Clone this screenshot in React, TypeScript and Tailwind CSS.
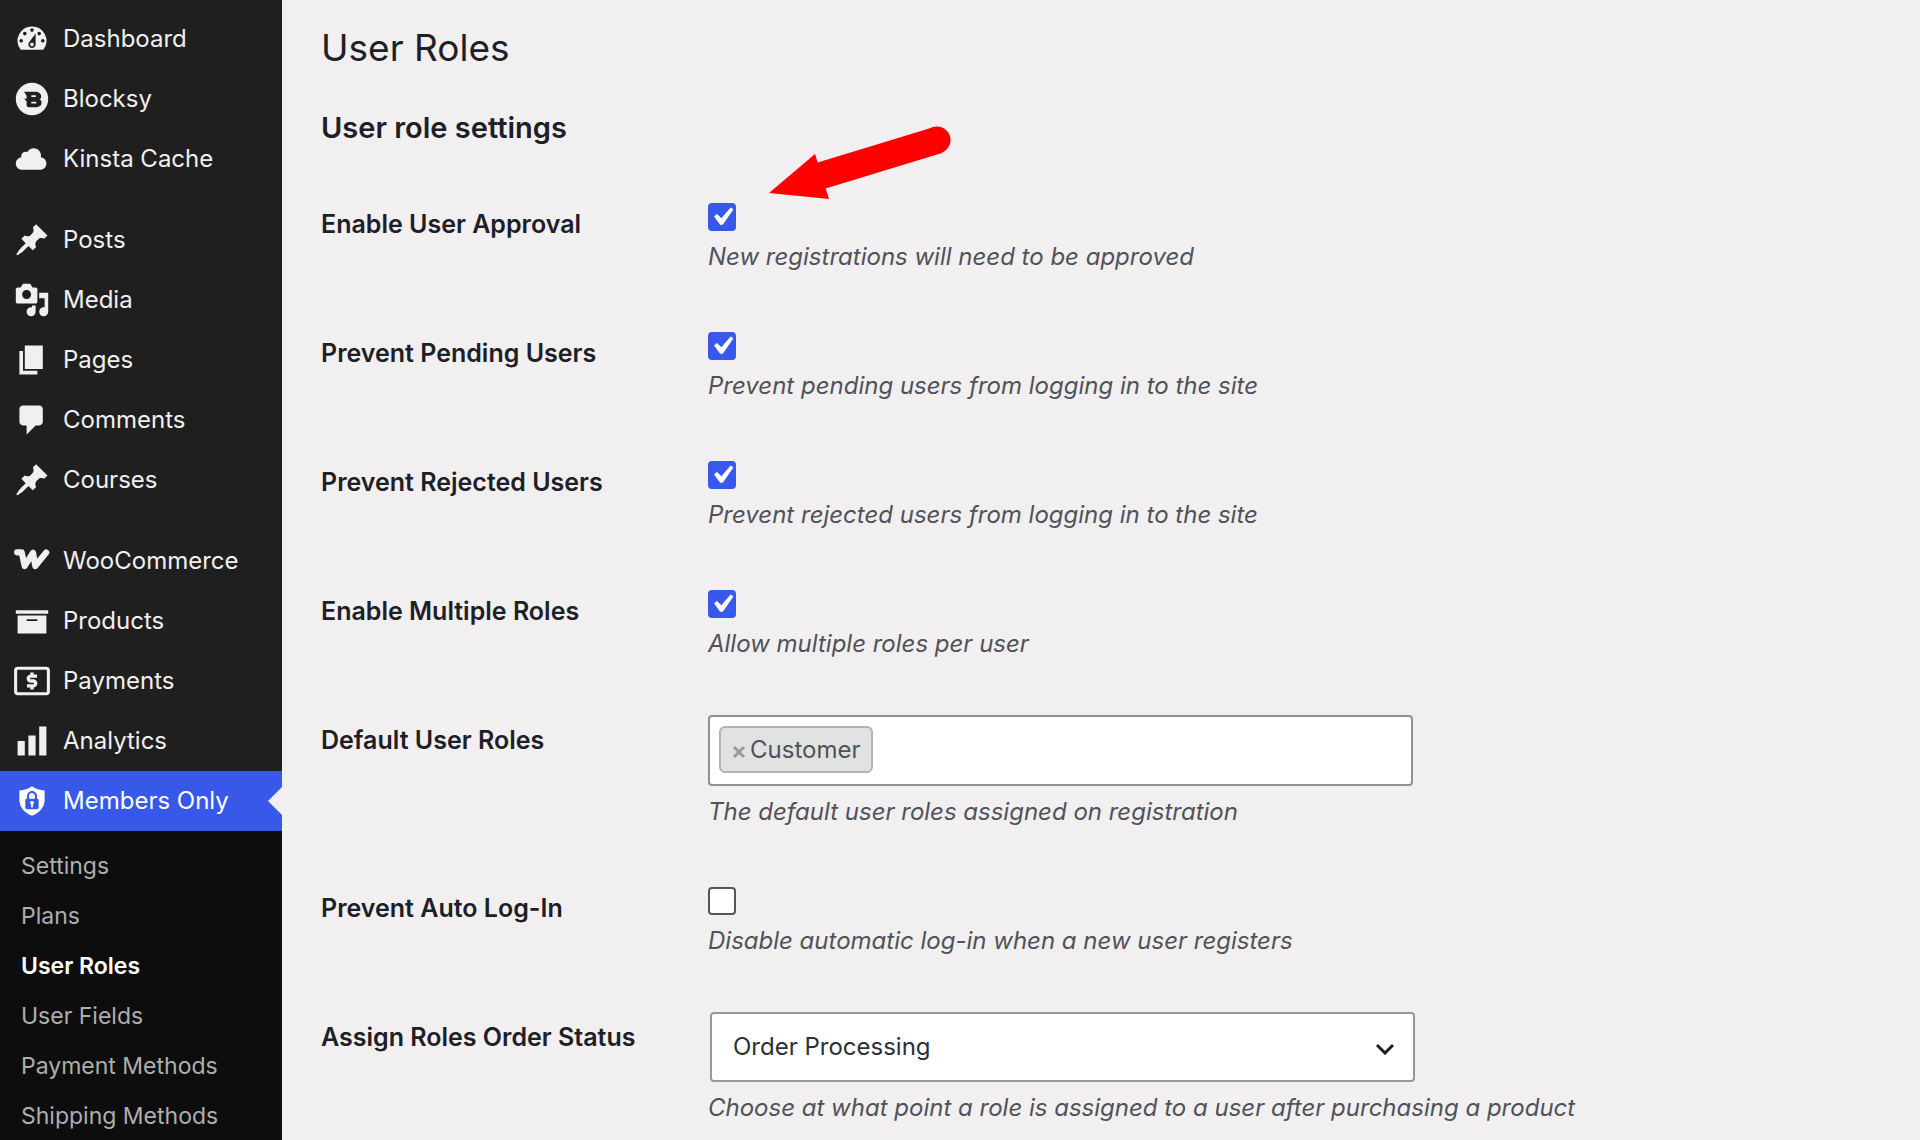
import { useState, type ReactNode } from "react";

const glyphs: Record<string, ReactNode> = {
  dashboard: (
    <path d="M3.76 16h12.48A7.998 7.998 0 0 0 10 3a7.998 7.998 0 0 0-6.24 13zM10 4c.55 0 1 .45 1 1s-.45 1-1 1-1-.45-1-1 .45-1 1-1zM6 6c.55 0 1 .45 1 1s-.45 1-1 1-1-.45-1-1 .45-1 1-1zm8 0c.55 0 1 .45 1 1s-.45 1-1 1-1-.45-1-1 .45-1 1-1zm-5.37 5.55L12 7v6c0 1.1-.9 2-2 2s-2-.9-2-2c0-.57.24-1.08.63-1.45zM4 10c.55 0 1 .45 1 1s-.45 1-1 1-1-.45-1-1 .45-1 1-1zm12 0c.55 0 1 .45 1 1s-.45 1-1 1-1-.45-1-1 .45-1 1-1zm-5 3c0-.55-.45-1-1-1s-1 .45-1 1 .45 1 1 1 1-.45 1-1z" />
  ),
  blocksy: (
    <>
      <circle cx="10" cy="10" r="9" />
      <path
        d="M5.6 6h6c2.200 0 3.500 1 3.500 2.600 0 .8-.3 1.400-.9 1.700.8.4 1.100 1 1.100 1.800 0 1.600-1.300 2.500-3.600 2.500H8.200c-.8 0-1.200-.4-1.200-1.200v-2.200L5.600 9.900H7V8.200z"
        fill="#1f1f1f"
      />
      <path d="M10 8.400h1.800M10 12h2" stroke="currentColor" strokeWidth="1" strokeLinecap="round" />
    </>
  ),
  cloud: (
    <path d="M14.9 9c1.8.2 3.1 1.7 3.1 3.5 0 1.9-1.6 3.5-3.5 3.5h-10C2.6 16 1 14.4 1 12.5 1 10.7 2.3 9.3 4.1 9 4 8.9 4 8.7 4 8.5 4 7.1 5.1 6 6.5 6c.3 0 .7.1.9.2C8.1 4.9 9.4 4 11 4c2.2 0 4 1.8 4 4 0 .4-.1.7-.1 1z" />
  ),
  pin: (
    <path d="M10.44 3.02l1.82-1.82 6.36 6.35-1.83 1.82c-1.05-.68-2.48-.57-3.41.36l-.75.75c-.92.93-1.04 2.35-.35 3.41l-1.83 1.82-2.41-2.41-2.8 2.79c-.42.42-3.38 2.71-3.8 2.29s1.86-3.39 2.28-3.81l2.79-2.79L4.1 9.36l1.83-1.82c1.05.69 2.48.57 3.4-.36l.75-.75c.93-.92 1.05-2.35.36-3.41z" />
  ),
  media: (
    <path d="M13 11V4c0-.55-.45-1-1-1h-1.67L9 1H5L3.67 3H2c-.55 0-1 .45-1 1v7c0 .55.45 1 1 1h10c.55 0 1-.45 1-1zM7 4.5c1.38 0 2.5 1.12 2.5 2.5S8.38 9.5 7 9.5 4.5 8.38 4.5 7 5.62 4.5 7 4.5zM14 6h5v10.5c0 1.38-1.12 2.5-2.5 2.5S14 17.88 14 16.5s1.12-2.5 2.5-2.5c.17 0 .34.02.5.05V9h-3V6zm-4 8.05V13h2v3.5c0 1.38-1.12 2.5-2.5 2.5S7 17.88 7 16.5 8.12 14 9.5 14c.17 0 .34.02.5.05z" />
  ),
  pages: <path d="M6 15V2h10v13H6zm-1 1h8v2H3V5h2v11z" />,
  comment: <path d="M5 2h9c1.1 0 2 .9 2 2v7c0 1.1-.9 2-2 2h-2l-5 5v-5H5c-1.1 0-2-.9-2-2V4c0-1.1.9-2 2-2z" />,
  woo: (
    <path
      d="M1.7 5.2H4.3L5.9 12.8 10.6 5.4 11.8 12.8 17.9 5.3"
      fill="none"
      stroke="currentColor"
      strokeWidth="3.4"
      strokeLinecap="round"
      strokeLinejoin="round"
    />
  ),
  archive: <path d="M19 4v2H1V4h18zM2 7h16v10H2V7zm11 3V9H7v1h6z" />,
  payments: (
    <>
      <rect x="0.9" y="2.9" width="18.2" height="14.2" rx="1.2" fill="none" stroke="currentColor" strokeWidth="1.7" />
      <path
        d="M12.8 7.3H9.300a1.350 1.350 0 0 0 0 2.700h1.400a1.350 1.350 0 0 1 0 2.700H7.200M10 5.300v2M10 12.700v2"
        fill="none"
        stroke="currentColor"
        strokeWidth="1.9"
      />
    </>
  ),
  bars: <path d="M18 18V2h-4v16h4zm-6 0V7H8v11h4zm-6 0v-8H2v8h4z" />,
  shield: (
    <>
      <path d="M10 1.800c2 1.500 4.400 2.200 7 2.300v5.400c0 4-2.700 7.100-7 8.700-4.300-1.600-7-4.700-7-8.700V4.100c2.600-.1 5-.8 7-2.300z" />
      <path d="M7.8 9V7.200a2.200 2.200 0 0 1 4.400 0V9" fill="none" stroke="#3858e9" strokeWidth="1.2" />
      <rect x="6.3" y="8.8" width="7.4" height="5.8" rx="0.8" fill="#3858e9" />
      <path d="M10 10a1 1 0 0 1 .5 1.900v1.700h-1v-1.700A1 1 0 0 1 10 10z" />
    </>
  ),
};

type Item = { icon: string; label: string; active?: boolean };

const groups: Item[][] = [
  [
    { icon: "dashboard", label: "Dashboard" },
    { icon: "blocksy", label: "Blocksy" },
    { icon: "cloud", label: "Kinsta Cache" },
  ],
  [
    { icon: "pin", label: "Posts" },
    { icon: "media", label: "Media" },
    { icon: "pages", label: "Pages" },
    { icon: "comment", label: "Comments" },
    { icon: "pin", label: "Courses" },
  ],
  [
    { icon: "woo", label: "WooCommerce" },
    { icon: "archive", label: "Products" },
    { icon: "payments", label: "Payments" },
    { icon: "bars", label: "Analytics" },
    { icon: "shield", label: "Members Only", active: true },
  ],
];

const subItems = ["Settings", "Plans", "User Roles", "User Fields", "Payment Methods", "Shipping Methods"];

function Sidebar() {
  return (
    <nav aria-label="Main menu" className="flex w-[282px] shrink-0 flex-col bg-[#1f1f1f] pt-[9px]">
      <div className="flex flex-col gap-[21px]">
        {groups.map((group, i) => (
          <ul key={i}>
            {group.map((item) => (
              <li key={item.label}>
                <a
                  href="#"
                  className={
                    item.active
                      ? "relative flex h-[60px] items-center gap-[13px] bg-[#3858e9] pl-3.5 text-2xl text-white"
                      : "flex h-[60px] items-center gap-[13px] pl-3.5 text-2xl text-[#f2eff0]"
                  }
                >
                  <svg viewBox="0 0 20 20" className="size-9 shrink-0" fill="currentColor" aria-hidden="true">
                    {glyphs[item.icon]}
                  </svg>
                  {item.label}
                  {item.active && (
                    <svg viewBox="0 0 14 28" className="absolute right-0 h-7 w-3.5" aria-hidden="true">
                      <path d="M14 0v28L0 14z" fill="#f2eff0" />
                    </svg>
                  )}
                </a>
              </li>
            ))}
          </ul>
        ))}
      </div>
      <ul className="flex flex-1 flex-col gap-5 bg-[#0d0d0d] px-[21px] py-5 text-[23px] leading-[30px] text-[#b0adae]">
        {subItems.map((label) => (
          <li key={label}>
            <a href="#" className={label === "User Roles" ? "font-semibold text-white" : ""}>
              {label}
            </a>
          </li>
        ))}
      </ul>
    </nav>
  );
}

function Row({ id, label, description, children }: { id: string; label: string; description: string; children: ReactNode }) {
  return (
    <div className="flex items-start">
      <label htmlFor={id} className="w-[387px] shrink-0 pt-[7px] text-[25px] leading-9 font-semibold">
        {label}
      </label>
      <div className="flex min-w-0 flex-1 flex-col items-start gap-2">
        {children}
        <p id={id + "-description"} className="text-2xl leading-9 text-[#50525a] italic">
          {description}
        </p>
      </div>
    </div>
  );
}

function CheckboxRow({ id, label, description, checked = false }: { id: string; label: string; description: string; checked?: boolean }) {
  return (
    <Row id={id} label={label} description={description}>
      <span className="relative mt-1 flex size-7">
        <input
          id={id}
          type="checkbox"
          defaultChecked={checked}
          aria-describedby={id + "-description"}
          className="peer size-7 appearance-none rounded border-2 border-[#55565a] bg-white checked:border-[#3858e9] checked:bg-[#3858e9]"
        />
        <svg
          viewBox="0 0 20 20"
          className="pointer-events-none absolute -top-1 -left-1 hidden size-9 peer-checked:block"
          fill="#fff"
          stroke="#fff"
          strokeWidth="0.3"
          strokeLinejoin="round"
          aria-hidden="true"
        >
          <path d="M14.83 4.89l1.34.94-5.81 8.38H9.02L5.78 9.67l1.34-1.25 2.57 2.4z" />
        </svg>
      </span>
    </Row>
  );
}

export default function App() {
  const [roles, setRoles] = useState(["Customer"]);

  return (
    <div className="flex min-h-screen bg-[#f2eff0] font-['Inter',sans-serif] text-[#1d2027]">
      <Sidebar />
      <main className="relative min-w-0 flex-1 pt-6 pl-[39px]">
        <h1 className="text-[37px] leading-[48px]">User Roles</h1>
        <h2 className="mt-[38px] text-[29px] leading-9 font-semibold">User role settings</h2>

        <svg viewBox="0 0 184 74" className="pointer-events-none absolute top-[126px] left-[486px] h-[74px] w-[184px]" aria-hidden="true">
          <path d="M1 67 47 28 61 73z" fill="#fe0000" />
          <path d="M52 50 170 14" stroke="#fe0000" strokeWidth="27" />
          <circle cx="169" cy="14" r="13.5" fill="#fe0000" />
        </svg>

        <form className="mt-[53px] flex flex-col gap-[53px]">
          <CheckboxRow id="approval" label="Enable User Approval" description="New registrations will need to be approved" checked />
          <CheckboxRow id="pending" label="Prevent Pending Users" description="Prevent pending users from logging in to the site" checked />
          <CheckboxRow id="rejected" label="Prevent Rejected Users" description="Prevent rejected users from logging in to the site" checked />
          <CheckboxRow id="multiple" label="Enable Multiple Roles" description="Allow multiple roles per user" checked />

          <Row id="roles" label="Default User Roles" description="The default user roles assigned on registration">
            <div className="flex w-[705px] max-w-full items-start rounded-sm border-2 border-[#8f9195] bg-white px-[9px] pt-[9px] pb-[11px]">
              {roles.map((role) => (
                <span
                  key={role}
                  className="flex h-[47px] items-center gap-1 rounded-md border-2 border-[#b3b3b3] bg-[#e1e3e3] px-[11px] text-2xl text-[#50525a]"
                >
                  <button
                    type="button"
                    aria-label={"Remove " + role}
                    className="text-[#999]"
                    onClick={() => setRoles(roles.filter((r) => r !== role))}
                  >
                    <svg viewBox="0 0 14 14" className="mt-1 size-3.5" aria-hidden="true">
                      <path d="M2 2l10 10M12 2L2 12" stroke="currentColor" strokeWidth="3" />
                    </svg>
                  </button>
                  {role}
                </span>
              ))}
              <input id="roles" type="text" aria-describedby="roles-description" className="h-[47px] min-w-0 flex-1 px-3 text-2xl outline-none" />
            </div>
          </Row>

          <CheckboxRow id="autologin" label="Prevent Auto Log-In" description="Disable automatic log-in when a new user registers" />

          <Row
            id="status"
            label="Assign Roles Order Status"
            description="Choose at what point a role is assigned to a user after purchasing a product"
          >
            <div className="relative ml-0.5 w-[705px] max-w-full">
              <select
                id="status"
                aria-describedby="status-description"
                className="block h-[70px] w-full appearance-none rounded-sm border-2 border-[#97989b] bg-white pl-[21px] text-2xl text-[#2c3036]"
              >
                <option>Order Processing</option>
                <option>Order Completed</option>
              </select>
              <svg viewBox="0 0 20 12" className="pointer-events-none absolute top-[31px] right-5 h-3 w-5" aria-hidden="true">
                <path d="M2 2l8 8 8-8" fill="none" stroke="#1d2027" strokeWidth="3" />
              </svg>
            </div>
          </Row>
        </form>
      </main>
    </div>
  );
}
